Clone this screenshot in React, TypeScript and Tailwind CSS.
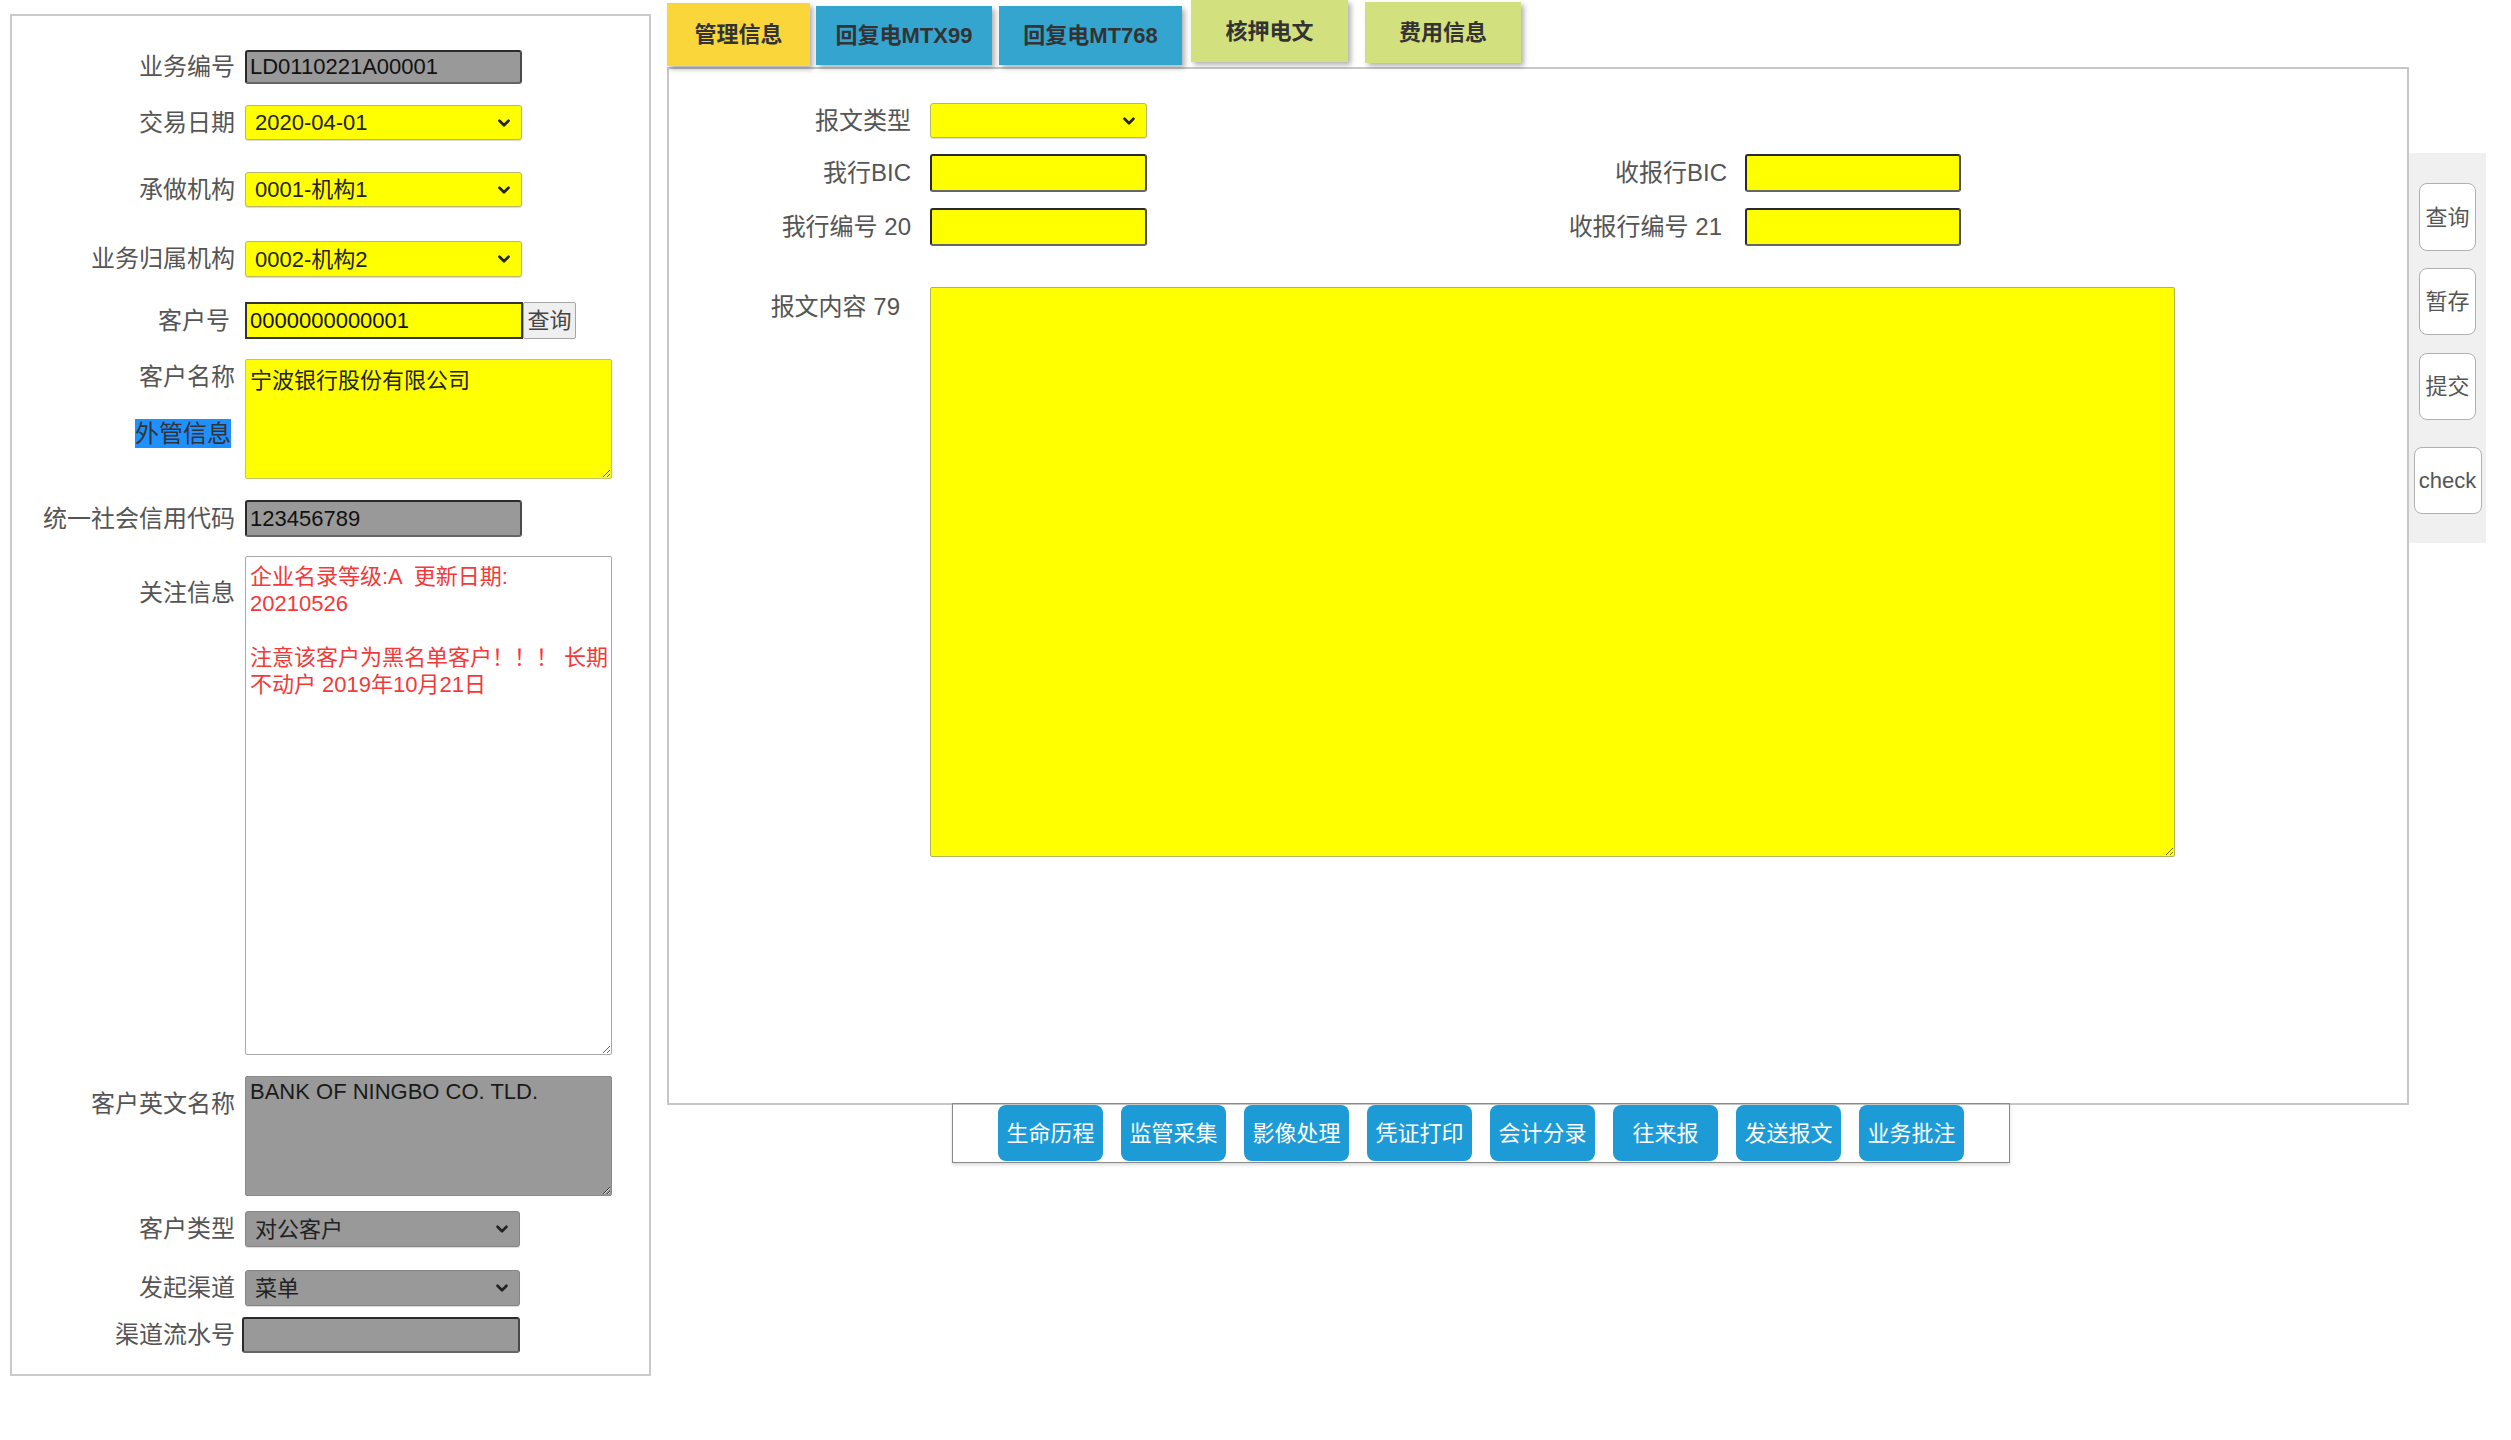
import { ChevronDown } from 'lucide-react';

const LABEL = 'w-[233px] shrink-0 pr-[10px] text-right text-[24px] leading-none text-[#555]';
const MAIN_LABEL = 'shrink-0 text-right text-[24px] leading-none text-[#555]';

const TABS = [
  { title: '管理信息', cls: 'mt-[3px] h-[63px] w-[143px] bg-[#fbd63b]' },
  { title: '回复电MTX99', cls: 'ml-[6px] mt-[6px] h-[59px] w-[176px] bg-[#34a5cf]' },
  { title: '回复电MT768', cls: 'ml-[7px] mt-[6px] h-[59px] w-[183px] bg-[#34a5cf]' },
  { title: '核押电文', cls: 'ml-[9px] h-[62px] w-[157px] bg-[#d3e07e]' },
  { title: '费用信息', cls: 'ml-[17px] mt-[2px] h-[61px] w-[156px] bg-[#d3e07e]' },
];

const ACTIONS = ['生命历程', '监管采集', '影像处理', '凭证打印', '会计分录', '往来报', '发送报文', '业务批注'];

function FakeSelect({ value = '', tone, className = '' }: { value?: string; tone: 'yellow' | 'gray'; className?: string }) {
  return (
    <div
      className={`flex items-center justify-between rounded-[3px] border pl-[9px] pr-[8px] text-[22px] text-[#222] shadow-[0_1px_1px_rgba(0,0,0,0.15)] ${
        tone === 'yellow' ? 'border-[#b8b86c] bg-[#ffff00]' : 'border-[#858585] bg-[#999999]'
      } ${className}`}
    >
      <span>{value}</span>
      <ChevronDown size={18} strokeWidth={3.5} className="text-[#222]" />
    </div>
  );
}

function Field({ value = '', tone, className = '' }: { value?: string; tone: 'yellow' | 'gray'; className?: string }) {
  return (
    <input
      readOnly
      defaultValue={value}
      className={`rounded-[3px] border-2 border-t-[#2a2a2a] border-l-[#2a2a2a] border-r-[#4a4a4a] border-b-[#666] px-[3px] text-[22px] text-[#111] outline-none ${
        tone === 'yellow' ? 'bg-[#ffff00]' : 'bg-[#999999]'
      } ${className}`}
    />
  );
}

function LeftPanel() {
  return (
    <aside className="ml-[10px] mt-[14px] flex h-[1362px] w-[641px] shrink-0 flex-col border-2 border-[#cacaca] pt-[34px]">
      <div className="flex items-center">
        <span className={LABEL}>业务编号</span>
        <Field tone="gray" value="LD0110221A00001" className="h-[34px] w-[277px]" />
      </div>
      <div className="mt-[21px] flex items-center">
        <span className={LABEL}>交易日期</span>
        <FakeSelect tone="yellow" value="2020-04-01" className="h-[35px] w-[277px]" />
      </div>
      <div className="mt-[32px] flex items-center">
        <span className={LABEL}>承做机构</span>
        <FakeSelect tone="yellow" value="0001-机构1" className="h-[35px] w-[277px]" />
      </div>
      <div className="mt-[34px] flex items-center">
        <span className={LABEL}>业务归属机构</span>
        <FakeSelect tone="yellow" value="0002-机构2" className="h-[36px] w-[277px]" />
      </div>
      <div className="mt-[25px] flex items-center">
        <span className={`${LABEL} pr-[15px]`}>客户号</span>
        <input
          readOnly
          defaultValue="0000000000001"
          className="h-[37px] w-[278px] border-2 border-[#333] bg-[#ffff00] px-[3px] text-[22px] text-[#111] outline-none"
        />
        <button className="h-[37px] w-[53px] rounded-[2px] border border-[#a5a5a5] bg-[#efefef] text-[22px] text-[#444]">查询</button>
      </div>
      <div className="mt-[20px] flex items-start">
        <div className="flex w-[233px] shrink-0 flex-col items-end pr-[10px] pt-[6px] text-[24px] leading-none text-[#555]">
          <span>客户名称</span>
          <span className="mr-[4px] mt-[30px] bg-[#1e90ff] leading-[29px] text-[#333]">外管信息</span>
        </div>
        <textarea
          readOnly
          defaultValue="宁波银行股份有限公司"
          className="h-[120px] w-[367px] rounded-[2px] border border-[#c2c270] bg-[#ffff00] px-[4px] pt-[7px] text-[22px] leading-[27px] text-[#222] outline-none"
        />
      </div>
      <div className="mt-[21px] flex items-center">
        <span className={LABEL}>统一社会信用代码</span>
        <Field tone="gray" value="123456789" className="h-[37px] w-[277px]" />
      </div>
      <div className="mt-[19px] flex items-start">
        <span className={`${LABEL} pt-[25px]`}>关注信息</span>
        <textarea
          readOnly
          wrap="off"
          defaultValue={'企业名录等级:A  更新日期:\n20210526\n\n注意该客户为黑名单客户！！！ 长期\n不动户 2019年10月21日'}
          className="h-[499px] w-[367px] overflow-hidden rounded-[2px] border border-[#a9a9a9] bg-white px-[4px] pt-[6px] text-[22px] leading-[27px] text-[#f23a3a] outline-none"
        />
      </div>
      <div className="mt-[21px] flex items-start">
        <span className={`${LABEL} pt-[16px]`}>客户英文名称</span>
        <textarea
          readOnly
          defaultValue="BANK OF NINGBO CO. TLD."
          className="h-[120px] w-[367px] rounded-[2px] border border-[#8a8a8a] bg-[#999999] px-[4px] pt-[1px] text-[22px] leading-[27px] text-[#1a1a1a] outline-none"
        />
      </div>
      <div className="mt-[15px] flex items-center">
        <span className={LABEL}>客户类型</span>
        <FakeSelect tone="gray" value="对公客户" className="h-[36px] w-[275px]" />
      </div>
      <div className="mt-[23px] flex items-center">
        <span className={LABEL}>发起渠道</span>
        <FakeSelect tone="gray" value="菜单" className="h-[36px] w-[275px]" />
      </div>
      <div className="mt-[11px] flex items-center">
        <span className={LABEL}>渠道流水号</span>
        <Field tone="gray" className="-ml-[3px] h-[36px] w-[278px]" />
      </div>
    </aside>
  );
}

function MainPanel() {
  return (
    <section className="h-[1038px] w-[1742px] border-2 border-[#c6c6c6] pt-[34px]">
      <div className="flex items-center">
        <span className={`${MAIN_LABEL} w-[261px] pr-[19px]`}>报文类型</span>
        <FakeSelect tone="yellow" className="h-[35px] w-[217px]" />
      </div>
      <div className="mt-[16px] flex items-center">
        <span className={`${MAIN_LABEL} w-[261px] pr-[19px]`}>我行BIC</span>
        <Field tone="yellow" className="h-[38px] w-[217px]" />
        <span className={`${MAIN_LABEL} w-[598px] pr-[18px]`}>收报行BIC</span>
        <Field tone="yellow" className="h-[38px] w-[216px]" />
      </div>
      <div className="mt-[16px] flex items-center">
        <span className={`${MAIN_LABEL} w-[261px] pr-[19px]`}>我行编号 20</span>
        <Field tone="yellow" className="h-[38px] w-[217px]" />
        <span className={`${MAIN_LABEL} w-[598px] pr-[23px]`}>收报行编号 21</span>
        <Field tone="yellow" className="h-[38px] w-[216px]" />
      </div>
      <div className="mt-[41px] flex items-start">
        <span className={`${MAIN_LABEL} w-[261px] pr-[30px] pt-[8px]`}>报文内容 79</span>
        <textarea readOnly className="h-[570px] w-[1245px] rounded-[2px] border border-[#b3b35c] bg-[#ffff00] outline-none" />
      </div>
    </section>
  );
}

export default function App() {
  return (
    <div className="flex min-h-screen items-start bg-white font-['Liberation_Sans','Noto_Sans_CJK_SC',sans-serif]">
      <LeftPanel />

      <main className="ml-[16px] w-[1742px] shrink-0">
        <div className="flex h-[67px] items-start">
          {TABS.map((t) => (
            <div
              key={t.title}
              className={`flex items-center justify-center text-[22px] font-bold text-[#333] shadow-[3px_3px_5px_rgba(0,0,0,0.3)] ${t.cls}`}
            >
              {t.title}
            </div>
          ))}
        </div>

        <MainPanel />

        <div className="-mt-[2px] ml-[285px] flex h-[60px] w-[1058px] gap-[18px] border border-[#8a8a8a] pl-[45px] pt-[1px] shadow-[0_2px_3px_rgba(0,0,0,0.15)]">
          {ACTIONS.map((a) => (
            <button key={a} className="h-[56px] w-[105px] rounded-[8px] bg-[#1d9bd7] text-[22px] text-white">
              {a}
            </button>
          ))}
        </div>
      </main>

      <nav className="mt-[153px] flex h-[390px] w-[77px] shrink-0 flex-col items-center bg-[#f0f0f0] pt-[30px]">
        <button className="h-[68px] w-[57px] rounded-[8px] border border-[#b0b0b0] bg-white text-[22px] text-[#555]">查询</button>
        <button className="mt-[17px] h-[67px] w-[57px] rounded-[8px] border border-[#b0b0b0] bg-white text-[22px] text-[#555]">暂存</button>
        <button className="mt-[18px] h-[67px] w-[57px] rounded-[8px] border border-[#b0b0b0] bg-white text-[22px] text-[#555]">提交</button>
        <button className="mt-[27px] h-[67px] w-[68px] rounded-[8px] border border-[#b0b0b0] bg-white text-[22px] text-[#555]">check</button>
      </nav>
    </div>
  );
}
